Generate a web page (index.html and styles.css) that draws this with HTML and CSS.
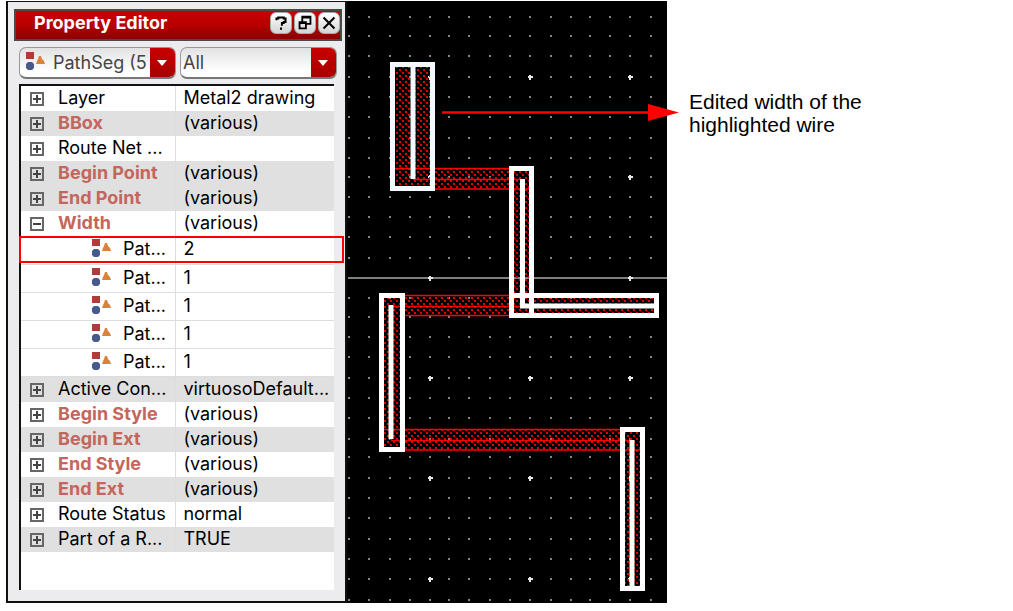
FILE: index.html
```
<!DOCTYPE html>
<html lang="en">
<head>
<meta charset="utf-8">
<title>Property Editor</title>
<link rel="stylesheet" href="styles.css">
</head>
<body>
<svg class="defs" aria-hidden="true">
  <symbol id="shapes" viewBox="0 0 20 20">
    <path d="M1 1h8v7H1z" fill="#b43a3a"/>
    <path d="M3 11h4l2 2v4l-2 2H3l-2-2v-4z" fill="#465a8c"/>
    <path d="M14 5h2l1 3 2 2 1 3h-9l1-3 1-2z" fill="#d8833c"/>
  </symbol>
</svg>
<main class="figure">
  <section class="panel">
    <header class="titlebar">
      <h1 class="title">Property Editor</h1>
      <button class="tool" type="button" aria-label="Help"><svg viewBox="0 0 22 22"><path d="M6 8V6h2V5h6v1h2v4h-2v1h-2v3M11 16v2.500" fill="none" stroke="#000" stroke-width="2.200"/></svg></button>
      <button class="tool" type="button" aria-label="Float"><svg viewBox="0 0 22 22"><path d="M8 10V4h9v8h-5M8 5h9M5 10h7v7H5zM5 11h7" fill="none" stroke="#000" stroke-width="2"/></svg></button>
      <button class="tool" type="button" aria-label="Close"><svg viewBox="0 0 22 22"><path d="M5 5l12 12M17 5L5 17" fill="none" stroke="#000" stroke-width="2.200"/></svg></button>
    </header>
    <div class="filters">
      <div class="combo combo-object">
        <svg class="combo-icon"><use href="#shapes"/></svg>
        <select aria-label="Object"><option>PathSeg (5)</option></select>
      </div>
      <div class="combo">
        <select aria-label="Filter"><option>All</option></select>
      </div>
    </div>
    <div class="sheet">
      <table class="props">
        <colgroup><col class="name-col"><col></colgroup>
        <tbody>
        <tr><th scope="row"><button class="expand" type="button" aria-label="Expand"></button>Layer</th><td>Metal2 drawing</td></tr>
        <tr class="alt mixed"><th scope="row"><button class="expand" type="button" aria-label="Expand"></button>BBox</th><td>(various)</td></tr>
        <tr><th scope="row"><button class="expand" type="button" aria-label="Expand"></button>Route Net ...</th><td></td></tr>
        <tr class="alt mixed"><th scope="row"><button class="expand" type="button" aria-label="Expand"></button>Begin Point</th><td>(various)</td></tr>
        <tr class="alt mixed"><th scope="row"><button class="expand" type="button" aria-label="Expand"></button>End Point</th><td>(various)</td></tr>
        <tr class="mixed"><th scope="row"><button class="expand open" type="button" aria-label="Collapse"></button>Width</th><td>(various)</td></tr>
        <tr class="child marked"><th scope="row"><svg class="row-icon"><use href="#shapes"/></svg>Pat...</th><td>2</td></tr>
        <tr class="child"><th scope="row"><svg class="row-icon"><use href="#shapes"/></svg>Pat...</th><td>1</td></tr>
        <tr class="child"><th scope="row"><svg class="row-icon"><use href="#shapes"/></svg>Pat...</th><td>1</td></tr>
        <tr class="child"><th scope="row"><svg class="row-icon"><use href="#shapes"/></svg>Pat...</th><td>1</td></tr>
        <tr class="child"><th scope="row"><svg class="row-icon"><use href="#shapes"/></svg>Pat...</th><td>1</td></tr>
        <tr class="alt"><th scope="row"><button class="expand" type="button" aria-label="Expand"></button>Active Con...</th><td>virtuosoDefault...</td></tr>
        <tr class="mixed"><th scope="row"><button class="expand" type="button" aria-label="Expand"></button>Begin Style</th><td>(various)</td></tr>
        <tr class="alt mixed"><th scope="row"><button class="expand" type="button" aria-label="Expand"></button>Begin Ext</th><td>(various)</td></tr>
        <tr class="mixed"><th scope="row"><button class="expand" type="button" aria-label="Expand"></button>End Style</th><td>(various)</td></tr>
        <tr class="alt mixed"><th scope="row"><button class="expand" type="button" aria-label="Expand"></button>End Ext</th><td>(various)</td></tr>
        <tr><th scope="row"><button class="expand" type="button" aria-label="Expand"></button>Route Status</th><td>normal</td></tr>
        <tr class="alt"><th scope="row"><button class="expand" type="button" aria-label="Expand"></button>Part of a R...</th><td>TRUE</td></tr>
        </tbody>
      </table>
    </div>
  </section>
  <svg class="layout" viewBox="347 1 320 602" role="img" aria-label="Wire layout">
    <defs>
      <pattern id="fill" width="6" height="6" patternUnits="userSpaceOnUse">
        <path d="M0 0h2v2H0zM3 3h2v2H3z" fill="#e00000"/>
      </pattern>
      <path id="dots" d="M348 0h2M368 0h2M389 0h2M409 0h2M429 0h2M448 0h2M468 0h2M489 0h2M509 0h2M529 0h2M550 0h2M570 0h2M589 0h2M609 0h2M629 0h2M650 0h2"/>
      <path id="cross" d="M-2 0h5M0-2v5"/>
    </defs>
    <path d="M347 1h320v602H347z"/>
    <g id="grid" stroke="#858585" stroke-width="2"></g>
    <path d="M348 278h319" stroke="#808080" stroke-width="2"/>
    <g id="majors" stroke="#e8e8e8" stroke-width="2"></g>
    <g fill="url(#fill)">
      <path d="M395 66h36v121h-36zM431 168h83v21h-83zM514 171h16v142h-16zM530 298h125v15H530zM400 295h114v21H400zM384 298h16v149h-16zM400 429h225v21H400zM625 431h16v156h-16z"/>
    </g>
    <path d="M395 168.500h119M413 179.500h108M431 189h99M400 295.500h110M391 306.500h130M400 315.500h110M384 429.500h237M391 440.500h239M400 450h241" fill="none" stroke="#f00" stroke-width="1.500"/>
    <g fill="none" stroke="#fff" stroke-width="5">
      <path d="M392.500 64.500h40v124h-40zM413 66v113" stroke="#f4f8ff"/>
      <path d="M511.500 168.500h20v147h-20zM522.500 179v129M511.500 295.500h145v20h-145zM520 306h135"/>
      <path d="M381.500 295.500h21v154h-21zM391 305v134M622.500 429.500h20v159h-20zM632 440v147"/>
    </g>
    <path d="M442 112.500h208" stroke="#f00" stroke-width="2.500"/>
    <path d="M648 104v17l31-8.500z" fill="#f00"/>
  </svg>
  <p class="callout">Edited width of the<br>highlighted wire</p>
</main>
<script src="grid.js"></script>
</body>
</html>
```
FILE: grid.js
```
const rows = [17, 36, 56, 77, 97, 117, 138, 158, 177, 197, 217, 237, 258, 298, 317,
  337, 357, 378, 398, 418, 439, 457, 478, 498, 518, 539, 559, 579, 600];
const crosses = [[430, 77], [530, 77], [630, 77], [430, 177], [630, 177], [430, 278], [630, 278],
  [430, 378], [530, 378], [630, 378], [430, 478], [530, 478], [630, 478], [430, 579], [530, 579], [630, 579]];
document.getElementById('grid').innerHTML = rows.map(y => `<use href="#dots" y="${y}"/>`).join('');
document.getElementById('majors').innerHTML = crosses.map(([x, y]) => `<use href="#cross" x="${x}" y="${y}"/>`).join('');
```
FILE: styles.css
```
* { box-sizing: border-box; }
body {
  margin: 0;
  background: #fff;
  color: #000;
  font-family: Inter, "Liberation Sans", sans-serif;
}
.defs { position: absolute; width: 0; height: 0; }
.figure {
  display: grid;
  grid-template-columns: 341fr 320fr 346fr;
  align-items: start;
  padding: 1px 0 0 6px;
}
.panel {
  align-self: stretch;
  display: flex;
  flex-direction: column;
  padding: 6px 3px 11px 6px;
  background: #ececef;
  border: 2px solid #111;
  border-top-width: 1px;
}
.titlebar {
  display: flex;
  align-items: center;
  gap: 2px;
  height: 32px;
  margin-top: 1px;
  padding: 0 0 4px 18px;
  border: 2px solid #4a4a4a;
  background: linear-gradient(#c80000, #b80000 50%, #8c0000);
}
.title {
  flex: 1;
  margin: 0;
  color: #fff;
  font-size: 18px;
  font-weight: 700;
  line-height: 24px;
}
.tool {
  width: 22px;
  height: 22px;
  padding: 0;
  border: 1px solid #aaa;
  border-radius: 6px;
  background: linear-gradient(#fff, #d4d4d4);
}
.tool svg { display: block; width: 20px; height: 20px; }
.filters {
  display: grid;
  grid-template-columns: 1fr 1fr;
  gap: 4px;
  padding: 6px 5px 0 5px;
}
.combo {
  position: relative;
  height: 32px;
  border: 1px solid #999;
  border-bottom: 2px solid #777;
  border-radius: 7px;
  overflow: hidden;
  background: linear-gradient(#e2e2e2, #fff 80%);
}
.combo select {
  appearance: none;
  display: block;
  width: 100%;
  height: 28px;
  padding: 0 28px 0 2px;
  border: 0;
  background: transparent;
  color: #444;
  font: 18px Inter, "Liberation Sans", sans-serif;
}
.combo-object select { padding-left: 33px; }
.combo::before {
  content: "";
  position: absolute;
  inset: 0 0 0 auto;
  width: 25px;
  background: linear-gradient(#c80000, #a80000);
}
.combo::after {
  content: "";
  position: absolute;
  right: 8px;
  top: 12px;
  border: 5px solid transparent;
  border-top: 6px solid #fff;
  border-bottom: 0;
}
.combo-icon { position: absolute; left: 5px; top: 3px; width: 20px; height: 20px; }
.sheet {
  flex: 1;
  margin: 5px 8px 0 5px;
  border-top: 2px solid #111;
  border-left: 2px solid #111;
  background: #fff;
}
.props {
  width: 100%;
  border-collapse: collapse;
  table-layout: fixed;
  font-size: 18px;
  line-height: 23px;
}
.name-col { width: 49.5%; }
.props tr { position: relative; }
.props th, .props td {
  height: 25px;
  padding: 0 0 2px;
  font-weight: 400;
  text-align: left;
  white-space: nowrap;
}
.props th { border-right: 1px solid #ddd; }
.props td { padding-left: 7px; }
.props .alt { background: #e0e0e0; }
.props .mixed th { color: #c4665c; font-weight: 700; }
.props .child th, .props .child td { height: 28px; border-bottom: 1px solid #ddd; }
.expand {
  display: inline-block;
  width: 14px;
  height: 14px;
  margin: 0 14px 0 9px;
  padding: 0;
  border: 2px solid #666;
  background:
    linear-gradient(#444, #444) center / 8px 2px no-repeat,
    linear-gradient(#444, #444) center / 2px 8px no-repeat;
  vertical-align: 0;
}
.expand.open { background: linear-gradient(#444, #444) center / 8px 2px no-repeat; }
.row-icon {
  width: 20px;
  height: 20px;
  margin: 0 12px 0 70px;
  vertical-align: -3px;
}
.marked td::after {
  content: "";
  position: absolute;
  inset: 0 -10px 1px -2px;
  border: 2px solid #f00;
}
.layout { display: block; width: 100%; overflow: visible; }
.callout {
  margin: 89px 0 0 22px;
  color: #000;
  font: 21px/23px "Liberation Sans", Arial, sans-serif;
}
```
